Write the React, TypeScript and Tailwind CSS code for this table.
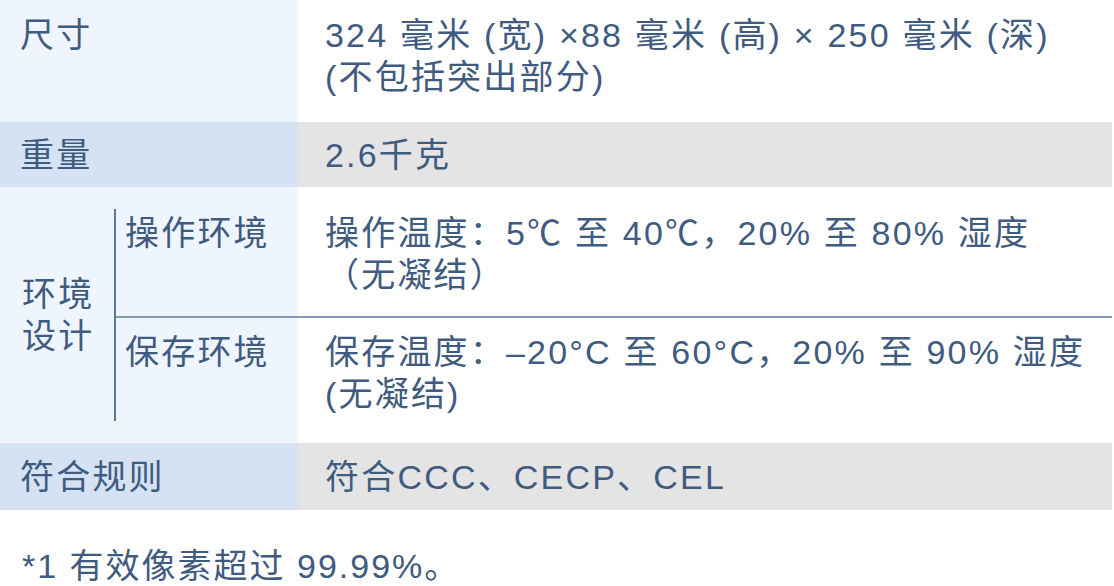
import React from 'react';

const FONT = { fontFamily: '"Liberation Sans", "Noto Sans CJK SC", sans-serif' };

export default function App() {
  return (
    <div className="w-[1114px] h-[586px] bg-white text-[#3f5b80] text-[34px] leading-[42px] tracking-[2.2px] overflow-hidden" style={FONT}>
      <div className="w-[1112px]">
        {/* 尺寸 */}
        <div className="flex h-[122px]">
          <div className="w-[298px] bg-[#eef5fe] pl-[20px] pt-[14px]">尺寸</div>
          <div className="flex-1 bg-white pl-[27px] pt-[14px]">
            <div>324 毫米 (宽) ×88 毫米 (高) × 250 毫米 (深)</div>
            <div>(不包括突出部分)</div>
          </div>
        </div>

        {/* 重量 */}
        <div className="flex h-[65px]">
          <div className="w-[298px] bg-[#d4e2f3] pl-[20px] flex items-center">重量</div>
          <div className="flex-1 bg-[#e4e4e4] pl-[27px] flex items-center">2.6千克</div>
        </div>

        {/* 环境设计 */}
        <div className="flex h-[256px]">
          <div className="w-[114px] bg-[#eef5fe] pl-[22px] flex items-center">
            <div>环境<br />设计</div>
          </div>
          <div className="flex-1 flex flex-col relative">
            <div className="flex h-[129px]">
              <div className="w-[184px] bg-[#eef5fe] pl-[11px] pt-[25px]">操作环境</div>
              <div className="flex-1 bg-white pl-[27px] pt-[25px]">
                <div>操作温度：5℃ 至 40℃，20% 至 80% 湿度</div>
                <div>（无凝结）</div>
              </div>
            </div>
            <div className="h-[2px] bg-[#8399b5]"></div>
            <div className="flex flex-1">
              <div className="w-[184px] bg-[#eef5fe] pl-[11px] pt-[13px]">保存环境</div>
              <div className="flex-1 bg-white pl-[27px] pt-[13px]">
                <div>保存温度：–20°C 至 60°C，20% 至 90% 湿度</div>
                <div>(无凝结)</div>
              </div>
            </div>
            <div className="absolute left-0 top-[22px] bottom-[22px] w-[2px] bg-[#5d7597]"></div>
          </div>
        </div>

        {/* 符合规则 */}
        <div className="flex h-[67px]">
          <div className="w-[298px] bg-[#d4e2f3] pl-[20px] flex items-center">符合规则</div>
          <div className="flex-1 bg-[#e4e4e4] pl-[27px] flex items-center">符合CCC、CECP、CEL</div>
        </div>
      </div>

      <div className="pl-[22px] pt-[35px] tracking-[2px]">*1 有效像素超过 99.99%。</div>
    </div>
  );
}
